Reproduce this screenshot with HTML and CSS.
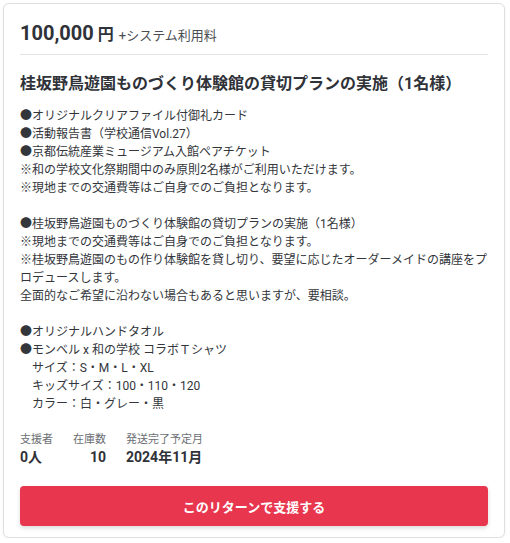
FILE: index.html
```html
<!DOCTYPE html>
<html lang="ja">
<head>
	<meta charset="utf-8">
	<title>リターン</title>
	<link rel="stylesheet" href="styles.css">
</head>
<body>
	<div class="reward-card">
		<div class="reward-price">
			<span class="price-amount">100,000<span class="price-unit">円</span></span>
			<span class="price-note">+システム利用料</span>
		</div>

		<h2 class="reward-title">桂坂野鳥遊園ものづくり体験館の貸切プランの実施（1名様）</h2>

		<p class="reward-body">●オリジナルクリアファイル付御礼カード<br>●活動報告書（学校通信Vol.27）<br>●京都伝統産業ミュージアム入館ペアチケット<br>※和の学校文化祭期間中のみ原則2名様がご利用いただけます。<br>※現地までの交通費等はご自身でのご負担となります。<br><br>●桂坂野鳥遊園ものづくり体験館の貸切プランの実施（1名様）<br>※現地までの交通費等はご自身でのご負担となります。<br>※桂坂野鳥遊園のもの作り体験館を貸し切り、要望に応じたオーダーメイドの講座をプロデュースします。<br>全面的なご希望に沿わない場合もあると思いますが、要相談。<br><br>●オリジナルハンドタオル<br>●モンベル x 和の学校 コラボＴシャツ<br>　サイズ：S・M・L・XL<br>　キッズサイズ：100・110・120<br>　カラー：白・グレー・黒</p>

		<div class="reward-stats">
			<div class="stat">
				<div class="stat-label">支援者</div>
				<div class="stat-value">0人</div>
			</div>
			<div class="stat stat-stock">
				<div class="stat-label">在庫数</div>
				<div class="stat-value">10</div>
			</div>
			<div class="stat">
				<div class="stat-label">発送完了予定月</div>
				<div class="stat-value">2024年11月</div>
			</div>
		</div>

		<button class="support-button">このリターンで支援する</button>
	</div>
</body>
</html>
```

FILE: styles.css
```css
body {
	margin: 0;
	padding: 3px 5px 0 3px;
	background-color: #fff;
	font-family: Roboto, "Noto Sans CJK JP", sans-serif;
	color: #2f3238;
}

.reward-card {
	padding: 15px 16px 11px 16px;
	background-color: #fff;
	border: 1px solid #dedfe2;
	border-radius: 6px;
	box-shadow: 0 1px 3px rgba(0, 0, 0, 0.06);
}

.reward-price {
	display: flex;
	align-items: baseline;
	gap: 5px;
	height: 28px;
	padding-bottom: 7px;
	border-bottom: 1px solid #e1e2e4;
	line-height: 28px;
}

.price-amount {
	font-size: 20px;
	font-weight: bold;
}

.price-unit {
	margin-left: 4px;
	font-size: 16px;
}

.price-note {
	font-size: 13px;
	color: #4a4d52;
}

.reward-title {
	margin: 17px 0 11px 0;
	font-size: 16px;
	font-weight: bold;
	line-height: 24px;
}

.reward-body {
	margin: 0;
	font-size: 12px;
	line-height: 18px;
	color: #33363b;
}

.reward-stats {
	display: flex;
	gap: 20px;
	margin-top: 19px;
}

.stat-label {
	font-size: 11px;
	line-height: 15px;
	color: #6b6e73;
}

.stat-value {
	font-size: 14px;
	font-weight: bold;
	line-height: 20px;
}

.stat-stock .stat-value {
	text-align: right;
}

.support-button {
	display: block;
	width: 100%;
	height: 40px;
	margin-top: 19px;
	border: none;
	border-radius: 4px;
	background-color: #e8364f;
	color: #fff;
	font-family: Roboto, "Noto Sans CJK JP", sans-serif;
	font-size: 13px;
	font-weight: bold;
	box-shadow: 0 2px 4px rgba(0, 0, 0, 0.15);
	cursor: pointer;
}
```
